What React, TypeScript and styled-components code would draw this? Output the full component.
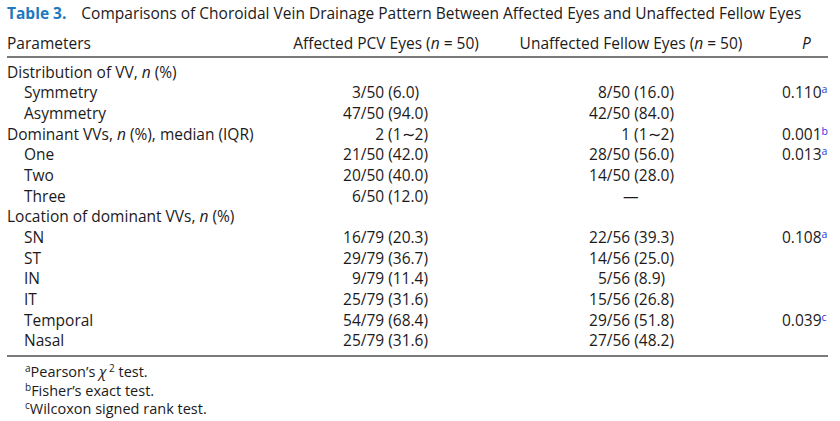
import React from 'react';
import styled, { createGlobalStyle } from 'styled-components';

const GlobalStyle = createGlobalStyle`
  html, body {
    margin: 0;
    padding: 0;
    background: #ffffff;
  }
  body {
    font-family: "Open Sans", "Liberation Sans", sans-serif;
    color: #1c1a1b;
  }
`;

const Page = styled.div`
  width: 840px;
  height: 421px;
  box-sizing: border-box;
  padding: 1px 12px 0 7px;
  font-size: 15.5px;
`;

const Caption = styled.div`
  display: flex;
  align-items: baseline;
  gap: 15px;
  height: 24px;
  line-height: 24px;
  font-size: 15.5px;
`;

const TableLabel = styled.span`
  color: #2079be;
  font-weight: 700;
`;

const Grid = styled.div`
  display: grid;
  grid-template-columns: 270px 218px 272px 61px;
  margin-top: 8px;
`;

const HeadCell = styled.div<{ $align?: string; $pad?: number }>`
  line-height: 20px;
  padding-bottom: 3px;
  padding-left: ${p => p.$pad || 0}px;
  margin-bottom: 3.5px;
  text-align: ${p => p.$align || 'left'};
  border-bottom: 2px solid #7a7a7a;
  white-space: nowrap;
`;

const Label = styled.div<{ $indent?: boolean }>`
  height: 20.7px;
  line-height: 20.7px;
  padding-left: ${p => (p.$indent ? 17 : 0)}px;
  white-space: nowrap;
`;

const Value = styled.div<{ $right: number }>`
  height: 20.7px;
  line-height: 20.7px;
  text-align: right;
  padding-right: ${p => p.$right}px;
  white-space: nowrap;
`;

const PValue = styled.div`
  height: 20.7px;
  line-height: 20.7px;
  padding-left: 15px;
  white-space: nowrap;
`;

const Mark = styled.sup`
  color: #3434d8;
  font-size: 10.5px;
  vertical-align: 5px;
  line-height: 0;
`;

const Ghost = styled.span`
  visibility: hidden;
`;

const Rule = styled.div`
  grid-column: 1 / -1;
  height: 2px;
  background: #7a7a7a;
  margin-top: 3.5px;
`;

const Notes = styled.div`
  padding-left: 18px;
  padding-top: 6.5px;
  font-size: 14.5px;
`;

const Note = styled.div`
  height: 18.5px;
  line-height: 18.5px;
`;

const NoteMark = styled.sup`
  font-size: 10px;
  vertical-align: 5px;
  line-height: 0;
`;

type Row = {
  label: React.ReactNode;
  indent?: boolean;
  a?: string;
  b?: string;
  p?: string;
  mark?: string;
};

const rows: Row[] = [
  { label: <>Distribution of VV, <i>n</i> (%)</> },
  { label: 'Symmetry', indent: true, a: '3/50 (6.0)_', b: '8/50 (16.0)', p: '0.110', mark: 'a' },
  { label: 'Asymmetry', indent: true, a: '47/50 (94.0)', b: '42/50 (84.0)' },
  { label: <>Dominant VVs, <i>n</i> (%), median (IQR)</>, a: '2 (1\u223c2)', b: '1 (1\u223c2)', p: '0.001', mark: 'b' },
  { label: 'One', indent: true, a: '21/50 (42.0)', b: '28/50 (56.0)', p: '0.013', mark: 'a' },
  { label: 'Two', indent: true, a: '20/50 (40.0)', b: '14/50 (28.0)' },
  { label: 'Three', indent: true, a: '6/50 (12.0)', b: '\u2014____' },
  { label: <>Location of dominant VVs, <i>n</i> (%)</> },
  { label: 'SN', indent: true, a: '16/79 (20.3)', b: '22/56 (39.3)', p: '0.108', mark: 'a' },
  { label: 'ST', indent: true, a: '29/79 (36.7)', b: '14/56 (25.0)' },
  { label: 'IN', indent: true, a: '9/79 (11.4)', b: '5/56 (8.9)_' },
  { label: 'IT', indent: true, a: '25/79 (31.6)', b: '15/56 (26.8)' },
  { label: 'Temporal', indent: true, a: '54/79 (68.4)', b: '29/56 (51.8)', p: '0.039', mark: 'c' },
  { label: 'Nasal', indent: true, a: '25/79 (31.6)', b: '27/56 (48.2)' },
];

// '_' stands for a hidden digit so the figures line up on the slash
const renderValue = (v?: string) => {
  if (!v) return null;
  const parts = v.split('_');
  const pads = parts.length - 1;
  return (
    <>
      {parts.join('')}
      {pads > 0 && <Ghost>{'0'.repeat(pads)}</Ghost>}
    </>
  );
};

const App: React.FC = () => {
  return (
    <Page>
      <GlobalStyle />
      <Caption>
        <TableLabel>Table 3.</TableLabel>
        <span>Comparisons of Choroidal Vein Drainage Pattern Between Affected Eyes and Unaffected Fellow Eyes</span>
      </Caption>
      <Grid>
        <HeadCell>Parameters</HeadCell>
        <HeadCell $align="center">Affected PCV Eyes (<i>n</i> = 50)</HeadCell>
        <HeadCell $align="center">Unaffected Fellow Eyes (<i>n</i> = 50)</HeadCell>
        <HeadCell $pad={35}><i>P</i></HeadCell>
        {rows.map((r, i) => (
          <React.Fragment key={i}>
            <Label $indent={r.indent}>{r.label}</Label>
            <Value $right={67}>{renderValue(r.a)}</Value>
            <Value $right={93}>{renderValue(r.b)}</Value>
            <PValue>
              {r.p}
              {r.mark && <Mark>{r.mark}</Mark>}
            </PValue>
          </React.Fragment>
        ))}
        <Rule />
      </Grid>
      <Notes>
        <Note><NoteMark>a</NoteMark>Pearson’s <i>χ</i><NoteMark> 2</NoteMark> test.</Note>
        <Note><NoteMark>b</NoteMark>Fisher’s exact test.</Note>
        <Note><NoteMark>c</NoteMark>Wilcoxon signed rank test.</Note>
      </Notes>
    </Page>
  );
};

export default App;
